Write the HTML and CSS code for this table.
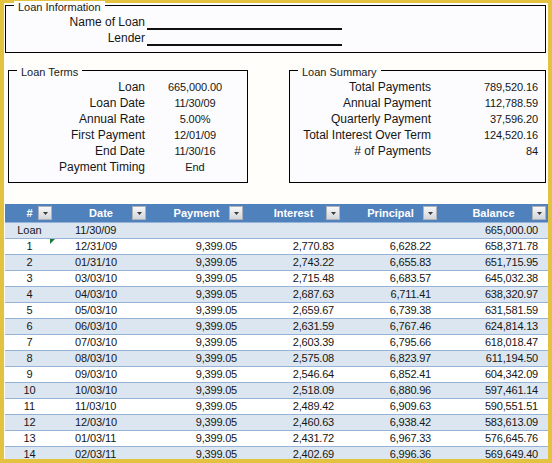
FILE: index.html
```html
<!DOCTYPE html>
<html>
<head>
<meta charset="utf-8">
<link rel="stylesheet" href="styles.css">
</head>
<body>
<div class="sheet">
  <section class="group info">
    <span class="caption">Loan Information</span>
    <div class="info-grid">
      <span class="lbl">Name of Loan</span><span class="field"></span>
      <span class="lbl">Lender</span><span class="field"></span>
    </div>
  </section>

  <div class="groups">
    <section class="group terms">
      <span class="caption">Loan Terms</span>
      <div class="kv terms-grid">
        <span class="lbl">Loan</span><span class="val">665,000.00</span>
        <span class="lbl">Loan Date</span><span class="val">11/30/09</span>
        <span class="lbl">Annual Rate</span><span class="val">5.00%</span>
        <span class="lbl">First Payment</span><span class="val">12/01/09</span>
        <span class="lbl">End Date</span><span class="val">11/30/16</span>
        <span class="lbl">Payment Timing</span><span class="val">End</span>
      </div>
    </section>
    <section class="group summary">
      <span class="caption">Loan Summary</span>
      <div class="kv summary-grid">
        <span class="lbl">Total Payments</span><span class="val">789,520.16</span>
        <span class="lbl">Annual Payment</span><span class="val">112,788.59</span>
        <span class="lbl">Quarterly Payment</span><span class="val">37,596.20</span>
        <span class="lbl">Total Interest Over Term</span><span class="val">124,520.16</span>
        <span class="lbl"># of Payments</span><span class="val">84</span>
      </div>
    </section>
  </div>

  <div class="table-wrap">
    <table class="amort">
      <colgroup>
        <col class="c-num"><col class="c-date"><col class="c-pay"><col class="c-int"><col class="c-prin"><col class="c-bal">
      </colgroup>
      <thead>
        <tr>
          <th>#<span class="dd"><svg width="5" height="3" viewBox="0 0 5 3"><path d="M0 0H5L2.5 3Z" fill="#3a3a3a"/></svg></span></th>
          <th>Date<span class="dd"><svg width="5" height="3" viewBox="0 0 5 3"><path d="M0 0H5L2.5 3Z" fill="#3a3a3a"/></svg></span></th>
          <th>Payment<span class="dd"><svg width="5" height="3" viewBox="0 0 5 3"><path d="M0 0H5L2.5 3Z" fill="#3a3a3a"/></svg></span></th>
          <th>Interest<span class="dd"><svg width="5" height="3" viewBox="0 0 5 3"><path d="M0 0H5L2.5 3Z" fill="#3a3a3a"/></svg></span></th>
          <th>Principal<span class="dd"><svg width="5" height="3" viewBox="0 0 5 3"><path d="M0 0H5L2.5 3Z" fill="#3a3a3a"/></svg></span></th>
          <th>Balance<span class="dd"><svg width="5" height="3" viewBox="0 0 5 3"><path d="M0 0H5L2.5 3Z" fill="#3a3a3a"/></svg></span></th>
        </tr>
      </thead>
      <tbody>
        <tr><td class="n">Loan</td><td class="d">11/30/09</td><td class="m"></td><td class="m"></td><td class="m"></td><td class="m b">665,000.00</td></tr>
        <tr><td class="n">1</td><td class="d"><span class="flag"></span>12/31/09</td><td class="m">9,399.05</td><td class="m">2,770.83</td><td class="m">6,628.22</td><td class="m b">658,371.78</td></tr>
        <tr><td class="n">2</td><td class="d">01/31/10</td><td class="m">9,399.05</td><td class="m">2,743.22</td><td class="m">6,655.83</td><td class="m b">651,715.95</td></tr>
        <tr><td class="n">3</td><td class="d">03/03/10</td><td class="m">9,399.05</td><td class="m">2,715.48</td><td class="m">6,683.57</td><td class="m b">645,032.38</td></tr>
        <tr><td class="n">4</td><td class="d">04/03/10</td><td class="m">9,399.05</td><td class="m">2,687.63</td><td class="m">6,711.41</td><td class="m b">638,320.97</td></tr>
        <tr><td class="n">5</td><td class="d">05/03/10</td><td class="m">9,399.05</td><td class="m">2,659.67</td><td class="m">6,739.38</td><td class="m b">631,581.59</td></tr>
        <tr><td class="n">6</td><td class="d">06/03/10</td><td class="m">9,399.05</td><td class="m">2,631.59</td><td class="m">6,767.46</td><td class="m b">624,814.13</td></tr>
        <tr><td class="n">7</td><td class="d">07/03/10</td><td class="m">9,399.05</td><td class="m">2,603.39</td><td class="m">6,795.66</td><td class="m b">618,018.47</td></tr>
        <tr><td class="n">8</td><td class="d">08/03/10</td><td class="m">9,399.05</td><td class="m">2,575.08</td><td class="m">6,823.97</td><td class="m b">611,194.50</td></tr>
        <tr><td class="n">9</td><td class="d">09/03/10</td><td class="m">9,399.05</td><td class="m">2,546.64</td><td class="m">6,852.41</td><td class="m b">604,342.09</td></tr>
        <tr><td class="n">10</td><td class="d">10/03/10</td><td class="m">9,399.05</td><td class="m">2,518.09</td><td class="m">6,880.96</td><td class="m b">597,461.14</td></tr>
        <tr><td class="n">11</td><td class="d">11/03/10</td><td class="m">9,399.05</td><td class="m">2,489.42</td><td class="m">6,909.63</td><td class="m b">590,551.51</td></tr>
        <tr><td class="n">12</td><td class="d">12/03/10</td><td class="m">9,399.05</td><td class="m">2,460.63</td><td class="m">6,938.42</td><td class="m b">583,613.09</td></tr>
        <tr><td class="n">13</td><td class="d">01/03/11</td><td class="m">9,399.05</td><td class="m">2,431.72</td><td class="m">6,967.33</td><td class="m b">576,645.76</td></tr>
        <tr><td class="n">14</td><td class="d">02/03/11</td><td class="m">9,399.05</td><td class="m">2,402.69</td><td class="m">6,996.36</td><td class="m b">569,649.40</td></tr>
      </tbody>
    </table>
  </div>
</div>
</body>
</html>
```

FILE: styles.css
```css
html, body {
  margin: 0;
  padding: 0;
}
body {
  width: 552px;
  height: 463px;
  overflow: hidden;
  font-family: "Liberation Sans", Arial, sans-serif;
  color: #161616;
}
.sheet {
  box-sizing: border-box;
  width: 552px;
  height: 463px;
  border: 4px solid #e2c23e;
  border-top-width: 3px;
  background: #fffefa;
  display: flex;
  flex-direction: column;
}

/* group boxes */
.group {
  position: relative;
  box-sizing: border-box;
  border: 1px solid #000;
  background: #fcfcfe;
}
.caption {
  position: absolute;
  top: -5px;
  left: 8px;
  padding: 0 4px;
  font-size: 11px;
  line-height: 12px;
  color: #1a1a1a;
  background: #fdfdfc;
  white-space: nowrap;
}
.lbl {
  font-size: 12px;
  line-height: 16px;
  text-align: right;
  white-space: nowrap;
}
.val {
  font-size: 11px;
  line-height: 16px;
  white-space: nowrap;
  letter-spacing: -0.1px;
}

.info {
  margin: 2px 2px 0 1px;
  padding: 8px 0 6px;
}
.info-grid {
  display: grid;
  grid-template-columns: 139px 195px;
  grid-auto-rows: 16px;
  column-gap: 2px;
}
.field {
  box-sizing: border-box;
  border-bottom: 2px solid #111;
}

.groups {
  display: flex;
  align-items: stretch;
  margin-top: 17px;
}
.terms {
  margin-left: 4px;
  width: 240px;
  padding: 8px 0 7px;
}
.summary {
  margin-left: 41px;
  width: 257px;
  padding: 8px 7px 7px 0;
}
.kv {
  display: grid;
  grid-auto-rows: 16px;
}
.terms-grid {
  grid-template-columns: 136px 100px;
}
.terms-grid .val {
  text-align: center;
}
.summary-grid {
  grid-template-columns: 141px 107px;
}
.summary-grid .val {
  text-align: right;
}

/* table */
.table-wrap {
  flex: 1;
  min-height: 0;
  overflow: hidden;
  margin: 21px 0 0 1px;
}
.amort {
  width: 543px;
  table-layout: fixed;
  border-collapse: separate;
  border-spacing: 0;
  font-size: 11px;
}
.c-num { width: 49px; }
.c-date { width: 94px; }
.c-pay { width: 97px; }
.c-int { width: 97px; }
.c-prin { width: 97px; }
.c-bal { width: 109px; }

.amort th {
  position: relative;
  height: 18px;
  padding: 0;
  background: #4f81bd;
  color: #fff;
  font-weight: bold;
  font-size: 11px;
  text-align: center;
  line-height: 18px;
}
.dd {
  position: absolute;
  right: 2px;
  top: 2px;
  box-sizing: border-box;
  width: 14px;
  height: 14px;
  border: 1px solid #aeb3ba;
  background: linear-gradient(#f7f7f8, #d3d6db);
  display: flex;
  align-items: center;
  justify-content: center;
}
.amort td {
  padding: 0;
  height: 15px;
  line-height: 15px;
  border-top: 1px solid #95b3d7;
  white-space: nowrap;
  color: #161616;
}
.amort tbody tr:nth-child(odd) td {
  background: #dce6f1;
}
.amort tbody tr:nth-child(even) td {
  background: #ffffff;
}
.amort td.n {
  text-align: center;
}
.amort td.d {
  position: relative;
  padding-left: 21px;
  letter-spacing: -0.1px;
}
.amort td.m {
  text-align: right;
  padding-right: 8px;
  letter-spacing: -0.2px;
}
.amort td.b {
  padding-right: 10px;
}
.flag {
  position: absolute;
  left: -4px;
  top: 0;
  width: 0;
  height: 0;
  border-top: 5px solid #1d7a33;
  border-right: 5px solid transparent;
}
```
